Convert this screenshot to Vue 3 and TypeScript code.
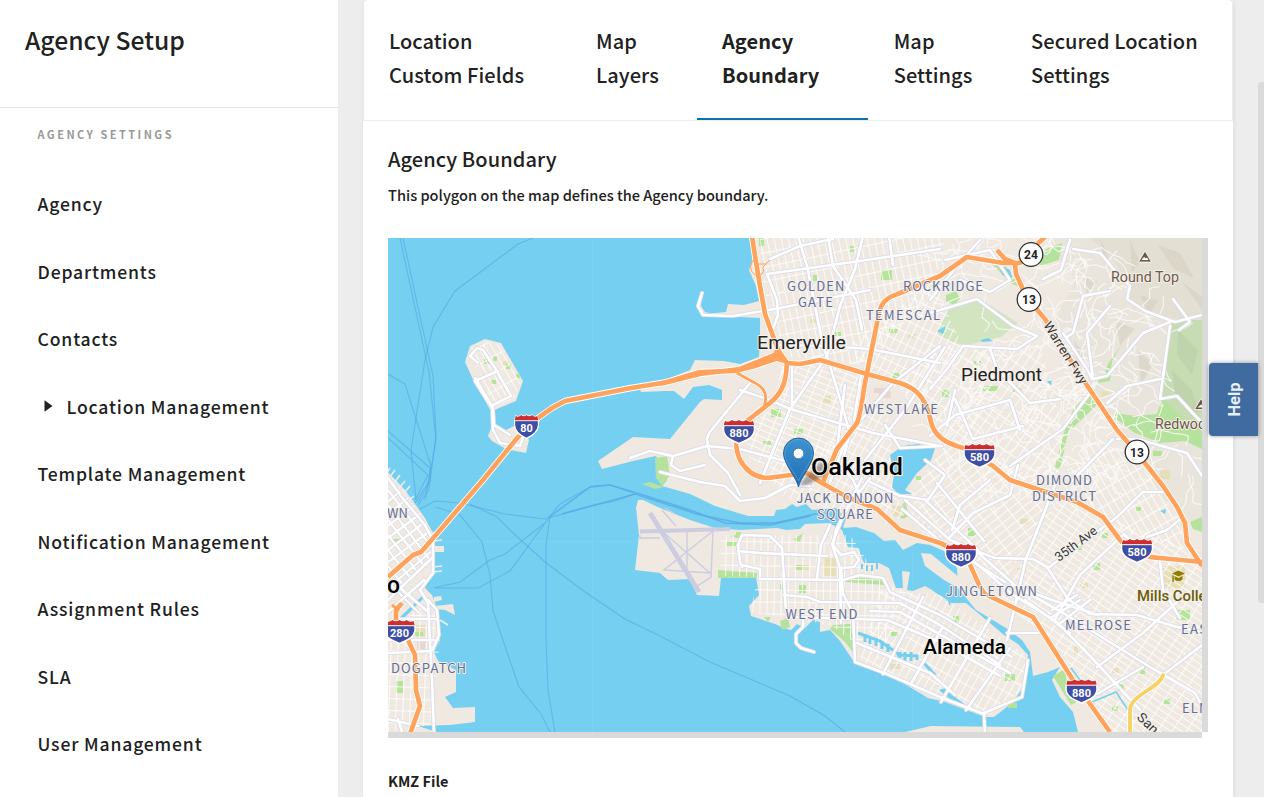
<script setup lang="ts">
interface Tab { lines: string[]; active?: boolean }
interface MapLabel { t: string; x: number; y: number; w?: number; k: string; r?: number }
interface Grid { id: string; w: number; h: number; a: number; pts: string }
interface Badge { n: string; x: number; y: number }

const tabs: Tab[] = [
  { lines: ['Location', 'Custom Fields'] },
  { lines: ['Map', 'Layers'] },
  { lines: ['Agency', 'Boundary'], active: true },
  { lines: ['Map', 'Settings'] },
  { lines: ['Secured Location', 'Settings'] },
]

const navItems = [
  { label: 'Agency' },
  { label: 'Departments' },
  { label: 'Contacts' },
  { label: 'Location Management', expandable: true },
  { label: 'Template Management' },
  { label: 'Notification Management' },
  { label: 'Assignment Rules' },
  { label: 'SLA' },
  { label: 'User Management' },
]

const land: string[] = [
  // East Bay mainland
  'M751 238L753 258 749 270 756 286 759 301 744 305 728 304 726 312 704 314 698 306 701 293 703 293 701 306 705 312 722 316 760 318 760 340 759 357 740 364 724 361 695 360 690 370 670 378 640 388 641 392 666 391 674 391 684 399 693 387 709 385 722 390 722 400 704 399 700 402 670 439 633 437 598 461 602 469 633 461 656 456 663 468 667 480 662 486 676 490 690 494 715 506 748 516 774 516 776 510 785 509 792 504 797 507 806 504 812 510 836 508 846 518 843 528 856 527 874 533 884 541 895 540 903 550 917 543 930 545 944 551 957 568 958 588 976 610 1006 628 1022 640 1030 652 1033 676 1048 672 1060 667 1052 680 1060 697 1073 712 1078 732 1202 732 1202 238Z',
  // Alameda
  'M638 500L636 508 639 535 635 570 660 573 668 580 690 579 697 595 719 596 721 578 756 577 759 595 749 606 751 616 775 624 784 628 791 630 797 624 805 628 813 620 820 622 820 632 830 630 840 641 854 662 890 675 928 698 945 702 985 717 994 717 1012 703 1025 685 1028 655 1018 644 1004 635 984 618 966 603 950 603 932 590 925 586 913 591 907 590 910 572 902 571 903 588 896 588 889 568 879 563 864 563 858 548 848 547 842 530 829 523 805 524 800 529 786 530 777 528 740 530 715 528 690 520 660 508 643 500Z',
  // Coast Guard Island
  'M921 553L931 554 948 568 965 582 958 588 944 580 925 566Z',
  // Bay Farm and Treasure Island
  'M905 732L931 726 1020 727 1024 732Z',
  'M465 362L470 346 485 339 501 343 523 381 516 401 492 411 496 425 506 430 518 424 529 440 526 453 506 449 492 441 488 436 495 418 475 384Z',
  // San Francisco
  'M388 472L405 490 425 518 433 533 433 570 425 588 432 595 437 608 440 625 440 639 434 652 438 661 456 670 456 692 445 697 453 708 475 707 475 722 450 725 418 726 437 732 388 732Z',
  'M435 546L444 546 444 552 435 552ZM434 597L441 596 442 600 434 602ZM435 606L453 604 455 615 445 610 435 609Z',
]

const hills = 'M1043 238L1202 238 1202 530 1165 500 1130 452 1080 380 1050 330 1075 280Z'

const water = [
  'M903 446L918 444 935 448 931 460 917 473 905 490 912 494 898 494 892 487 894 475 890 455Z',
  'M999 265L1010 270 1012 278 1002 275ZM937 331L946 326 943 334ZM981 340L988 338 993 341 982 342ZM1047 381L1052 381 1051 386ZM1160 511L1166 509 1165 514Z',
  'M399 618L423 595 423 599 402 620Z',
  'M939 690L946 688 955 697 966 705 954 702Z',
]

const greens = [
  'M937 332L950 307 981 300 1018 323 1001 337 964 346 943 338Z',
  'M946 295L956 291 960 299 954 305 946 301ZM992 264L1005 265 1020 287 1012 284ZM1046 249L1062 243 1059 260 1039 266Z',
  'M1166 344L1173 320 1202 320 1202 449 1185 441 1160 443 1135 433 1115 418 1115 413 1135 416 1157 414 1164 391Z',
  'M1108 364L1122 344 1112 361 1110 381 1097 383 1094 378 1104 375ZM1092 394L1100 402 1081 420 1068 432 1060 470 1055 467 1065 429 1075 405Z',
  'M718 570L757 573 757 578 718 578ZM846 577L882 579 884 585 846 582ZM846 624L853 624 855 655 845 642 830 629 833 625Z',
  'M897 450L910 444 915 450 908 459ZM897 513L905 501 909 516 902 519ZM655 458L667 456 670 475 662 486 656 478Z',
  'M730 536L740 534 742 539ZM793 540L803 533 800 542ZM780 621L788 618 790 627 782 630ZM764 617L771 617 768 622ZM1053 676L1065 669 1068 692 1080 700 1071 705Z',
  'M1190 522L1202 517V532L1193 529ZM1012 393L1016 385 1022 390ZM642 484L650 482 664 487 655 489Z',
]

const smallParks: number[][] = [
  [881, 270, 11, 10], [771, 409, 10, 8], [794, 429, 9, 5], [892, 373, 7, 6], [834, 332, 7, 4], [889, 329, 9, 4], [763, 441, 8, 4], [850, 246, 4, 6], [813, 275, 4, 6],
  [727, 541, 11, 5], [736, 532, 5, 6], [796, 565, 7, 5], [799, 585, 7, 8], [780, 584, 4, 7], [891, 632, 7, 4], [968, 528, 8, 8], [1005, 674, 10, 7], [1008, 703, 9, 5], [953, 616, 6, 6], [1093, 563, 7, 7], [1102, 533, 6, 5],
  [1137, 668, 8, 6], [1118, 684, 6, 7], [1112, 706, 6, 5], [1164, 699, 6, 5], [1176, 610, 14, 10], [942, 390, 7, 7], [983, 386, 15, 5], [974, 361, 7, 4], [1153, 451, 9, 5], [396, 681, 7, 12], [415, 632, 8, 4], [393, 539, 8, 4], [484, 359, 7, 5], [493, 356, 4, 5], [506, 364, 5, 5], [491, 380, 5, 4], [516, 374, 4, 4], [822, 498, 5, 3], [916, 476, 5, 4], [1076, 544, 6, 6], [1136, 507, 5, 4], [759, 238, 5, 8],
]
const sandParks: number[][] = [
  [822, 396, 9, 7], [885, 392, 6, 6], [908, 334, 8, 4], [823, 558, 13, 18], [802, 565, 7, 5], [892, 506, 12, 10], [1163, 566, 22, 22], [1101, 391, 8, 6], [1160, 470, 10, 9], [1145, 538, 8, 5], [1017, 568, 9, 4], [1080, 583, 8, 5], [416, 625, 9, 12], [503, 361, 6, 4], [890, 664, 10, 5], [810, 319, 6, 4], [1020, 519, 8, 5], [932, 610, 6, 4], [1112, 668, 7, 5], [1074, 646, 4, 8],
]

const grids: Grid[] = [
  { id: 'g1', w: 7, h: 14, a: -12, pts: '760,238 945,238 930,300 880,345 860,365 790,356 765,310' },
  { id: 'g2', w: 6, h: 12, a: -68, pts: '782,362 860,370 850,432 815,470 750,462 745,430 775,405' },
  { id: 'g3', w: 7, h: 11, a: 26, pts: '850,345 935,280 950,320 965,350 920,400 865,372' },
  { id: 'g4', w: 7, h: 10, a: 28, pts: '760,470 830,440 860,390 890,420 892,480 905,520 835,510 790,500' },
  { id: 'g5', w: 7, h: 13, a: 52, pts: '905,500 950,440 1040,480 1060,500 1030,540 1000,590 960,550 925,540' },
  { id: 'g6', w: 6, h: 12, a: -56, pts: '1000,600 1060,495 1100,515 1180,545 1202,570 1202,732 1110,732 1060,650' },
  { id: 'g7', w: 7, h: 12, a: 1, pts: '721,535 850,535 880,580 905,592 880,660 830,625 751,612 757,577 721,576' },
  { id: 'g8', w: 7, h: 13, a: 29, pts: '880,590 940,595 1026,655 1022,690 990,714 935,695 860,660' },
  { id: 'g10', w: 7, h: 12, a: 2, pts: '388,630 432,600 440,640 430,725 388,732' },
  { id: 'g11', w: 6, h: 15, a: -30, pts: '471,348 487,342 501,346 520,383 514,399 492,408' },
  { id: 'g12', w: 8, h: 13, a: 35, pts: '930,345 1040,345 1060,420 1070,470 1020,480 945,440 900,390' },
  { id: 'g13', w: 7, h: 15, a: -30, pts: '1060,490 1085,440 1135,455 1180,520 1185,550 1120,530' },
]

const roads: string[] = [
  'M798 236L807 266 823 346 828 359 837 389 850 433 840 470', 'M770 259L800 246 833 239', 'M767 274L810 268 860 261 940 249',
  'M863 236L855 269 840 306 827 356 790 409 760 483', 'M828 236L833 266 856 300 862 330', 'M767 274L777 300 778 315 771 335',
  'M778 345L827 346 870 349 940 363', 'M740 390L770 400 790 409 873 433 940 446', 'M792 366L792 409', 'M707 439L709 433 750 383',
  'M707 439L710 455 728 473 740 495', 'M660 453L673 456 707 446 740 449 793 463', 'M673 456L671 465 680 471 705 465', 'M660 472L700 482 725 486 740 501 765 498 790 485 810 486',
  'M702 293L698 306 703 315 733 316 780 308 870 290', 'M847 436L893 383 940 346', 'M889 236L893 265', 'M846 440L830 482',
  'M865 460L905 410 945 347', 'M885 425L900 448 942 446', 'M925 460L945 475 928 500 902 496', 'M870 482L900 496', 'M845 385L837 449', 'M862 370L854 420',
  'M845 470L853 480 862 500', 'M870 478L845 512 832 544 840 568 841 623', 'M862 478L836 530 833 545 841 555', 'M830 525L821 545 817 578', 'M742 567L740 563 738 545 742 535 770 536 782 548 784 580 786 612',
  'M738 551L760 553 827 556', 'M742 565L760 569 760 576', 'M760 579L843 580 860 575 883 578 890 592 940 615 1012 657',
  'M784 595L807 597 820 602 900 603 940 625 1000 665', 'M787 617L887 620 940 642 1000 676', 'M870 611L900 612 950 640 1010 673', 'M841 555L854 552 859 560 854 567 841 568',
  'M841 568L843 594 853 613 855 662 887 674 940 697 984 714', 'M857 643L891 657 930 673 955 695', 'M883 674L923 597', 'M911 684L942 628', 'M941 702L990 618', 'M966 710L1010 648', 'M985 736L984 713 1022 697 1028 660',
  'M803 620L803 627 796 634 796 643 801 648 814 652', 'M976 551L1017 587 1063 613 1150 667 1195 693 1202 706', 'M970 558L1012 594 1057 622 1091 657 1140 710', 'M905 500L950 540 976 551 995 558 1033 559 1047 567 1068 599 1090 614 1137 615 1177 627 1202 632',
  'M1007 640L1026 559 1057 480', 'M1007 633L1040 633', 'M1048 568L1117 517 1143 492 1165 492', 'M1055 619L1080 575 1124 534 1145 556', 'M1097 667L1143 633 1186 594', 'M1097 694L1143 667', 'M1160 561L1163 590 1180 618',
  'M1147 537L1167 530 1183 517', 'M1163 675L1202 645', 'M1012 585L1052 600 1098 615', 'M1025 600L1070 633', 'M1052 617L1080 600 M1058 625L1090 600 M1052 610L1077 595',
  'M950 537L973 513 1010 495 1018 465', 'M925 500L978 550', 'M937 483L984 541', 'M902 509L940 541', 'M970 560L1005 582', 'M952 530L960 505 990 480',
  'M1070 240L1061 270 1043 279', 'M1073 249L1100 253 1117 273 1130 286 1127 299 1145 311 1175 322 1202 315', 'M1110 291L1083 296 1073 333 1067 337',
  'M1173 299L1190 322 1179 330', 'M1170 322L1143 333 1107 376 1093 379 1087 333 1110 306', 'M1170 326L1160 399 1177 396 1202 423',
  'M930 313L977 299 1013 326 1037 336 1017 349 963 346 947 369 930 389', 'M990 349L997 369 1030 403 1060 399', 'M955 390L947 426', 'M955 399L973 439 1023 426', 'M1063 333L1087 369 1092 379',
  'M1107 403L1127 386 1160 379', 'M1010 466L1063 429 1090 393', 'M1117 439L1137 439 1187 453 1202 476', 'M1070 483L1113 439', 'M930 436L955 415 1010 400 1020 430', 'M930 300L960 262 980 240', 'M945 260L990 250 1010 280 990 292 960 280',
  'M388 478L404 500 425 525 433 540V573L420 590 428 603 432 680 434 732', 'M388 600L433 557', 'M388 612L424 580', 'M388 653L432 651 439 635 437 610 428 600', 'M388 640L434 640', 'M398 619L437 619', 'M399 587L427 611', 'M402 732L398 719', 'M418 726L388 719',
  'M478 363L470 356 477 348 483 350 495 368 511 396 491 406 475 381 498 371', 'M475 378L493 408 494 425 510 435', 'M492 405L493 430 500 443 520 446 524 435', 'M630 458L650 451 668 455',
]

const sfStreets: string[] = [
  'M388 502L400 491M388 514L408 498M388 526L414 506M388 538L420 514M388 550L425 522M388 562L430 531M388 574L433 542M388 588L433 550',
  'M388 490L433 549M388 505L430 560M388 520L425 567M388 535L419 574M388 550L412 580M388 566L404 586M388 582L420 614',
]

const freeways: string[] = [
  'M388 577L413 555 421 552 435 536 483 480 518 437 538 418 552 408 565 401 631 388 668 382 700 374 740 369 765 359 777 354',
  'M660 384L700 372 735 371 755 366 778 358', 'M752 236L756 262 760 286 765 314 778 350 787 363 800 364 820 360 867 374 900 383C915 388 925 396 930 418C933 436 945 443 963 448L993 466 1010 480 1040 490 1077 502 1103 517 1120 540C1130 552 1145 557 1160 558L1202 562',
  'M787 363C786 383 782 393 770 403L743 424C734 434 735 448 740 460C748 474 760 480 775 477L807 473 820 482 847 497 877 509 900 530 940 543 960 552C972 560 976 585 985 594L1033 617 1073 680 1110 732',
  'M737 373L755 383C765 388 768 395 764 407', 'M823 482L837 449 857 423C862 410 862 396 866 378L879 313C882 299 890 297 900 293L940 276 967 257 985 260 1003 263 1020 263 1031 250 1046 236',
  'M997 250L1005 259 1015 263 1016 274 1027 298 1045 319 1078 372 1117 430 1137 453 1163 486 1177 507 1185 523 1187 543 1202 566',
  'M402 603L396 610 396 625', 'M408 640L415 655 416 690 420 706 410 734', 'M392 605L399 611',
]

const ferries = [
  'M400 238L429 372 436 440 428 486 418 502', 'M403 238L433 376 436 435 429 490 418 505', 'M388 374L405 384 431 466 425 500', 'M388 431L430 468 430 480 415 503', 'M533 238L518 244 455 291 433 327 425 360 411 450 416 500', 'M388 438L428 475 415 500',
  'M420 509L435 501 460 503 505 514 545 519 562 514 590 506 615 501 635 494', 'M436 507L460 515 482 542 490 575 493 611 519 687 541 714 550 732', 'M470 504L497 517 512 532 545 562 585 592 625 619 660 636 710 662 790 696 825 716 845 732', 'M434 588L478 588 510 571 548 519 M434 588L460 582 490 560 505 554 545 523',
  'M555 732L548 690 546 640 546 545 550 516 560 504 592 486 610 485 634 493',
]
const channels = ['M548 518L590 487 610 485 640 494 690 510 725 523 770 525 810 516', 'M562 514L635 494 700 515 740 523 775 523 820 513']

const labels: MapLabel[] = [
  { t: 'GOLDEN', x: 787, y: 291, w: 57.5, k: 'area' }, { t: 'GATE', x: 798, y: 307, w: 35, k: 'area' }, { t: 'ROCKRIDGE', x: 903, y: 290.5, w: 80, k: 'area' }, { t: 'TEMESCAL', x: 866, y: 320, w: 74, k: 'area' },
  { t: 'WESTLAKE', x: 864, y: 414, w: 74, k: 'area' }, { t: 'JACK LONDON', x: 796.5, y: 503, w: 97, k: 'area' }, { t: 'SQUARE', x: 817, y: 519, w: 56, k: 'area' }, { t: 'DIMOND', x: 1036, y: 484.5, w: 56, k: 'area' },
  { t: 'DISTRICT', x: 1032, y: 500.5, w: 64, k: 'area' }, { t: 'WEST END', x: 785.5, y: 618.5, w: 72, k: 'area' }, { t: 'JINGLETOWN', x: 946, y: 595.5, w: 91, k: 'area' }, { t: 'MELROSE', x: 1065, y: 630, w: 66, k: 'area' },
  { t: 'EAST', x: 1181, y: 634, w: 35, k: 'area' }, { t: 'ELMHURST', x: 1182, y: 713, w: 75, k: 'area' }, { t: 'DOGPATCH', x: 391, y: 672.5, w: 75, k: 'area' }, { t: 'WN', x: 387, y: 517.5, w: 21, k: 'area' },
  { t: 'Emeryville', x: 757, y: 349, w: 89, k: 'town' }, { t: 'Piedmont', x: 961, y: 381, w: 81, k: 'town' }, { t: 'Oakland', x: 811, y: 474.5, w: 92, k: 'city' }, { t: 'Alameda', x: 923, y: 654, w: 83, k: 'burg' }, { t: 'o', x: 387, y: 592.5, w: 13, k: 'city' },
  { t: 'Round Top', x: 1111, y: 282, w: 68, k: 'peak' }, { t: 'Redwood', x: 1155, y: 429, w: 59, k: 'peak' }, { t: 'Mills College', x: 1137, y: 601, w: 86, k: 'school' },
  { t: 'Warren Fwy', x: 1043, y: 325, w: 71, k: 'street', r: 58 }, { t: '35th Ave', x: 1059, y: 562, w: 49, k: 'street', r: -37 }, { t: 'San Leandro', x: 1136, y: 718, w: 80, k: 'street', r: 44 },
]

const interstates: Badge[] = [
  { n: '80', x: 526.5, y: 427 }, { n: '880', x: 739, y: 432 }, { n: '580', x: 979.5, y: 456 }, { n: '880', x: 961, y: 556 }, { n: '580', x: 1137, y: 551 }, { n: '880', x: 1081.5, y: 691.5 }, { n: '280', x: 399.5, y: 632 },
]
const stateRoutes: Badge[] = [{ n: '24', x: 1031, y: 254.5 }, { n: '13', x: 1029, y: 299.5 }, { n: '13', x: 1137, y: 452 }]

// Deterministic winding lanes for the hillside neighbourhoods
function windingLanes(): string[] {
  let seed = 41
  const rnd = () => { seed = (seed * 16807) % 2147483647; return seed / 2147483647 }
  const out: string[] = []
  for (let i = 0; i < 260; i++) {
    const f = rnd()
    let x = 950 + rnd() * 245
    let y = 240 + f * 240
    if (x > 1120 && y < 318) continue
    if (x > 1160 && y < 450) continue
    if (x > 930 && x < 1030 && y > 290 && y < 350) continue
    let d = `M${x.toFixed(1)} ${y.toFixed(1)}`
    let a = rnd() * 6.28
    for (let j = 0; j < 5; j++) {
      a += (rnd() - 0.5) * 2.4
      const mx = x + Math.cos(a) * 5, my = y + Math.sin(a) * 5
      a += (rnd() - 0.5) * 1.6
      x = mx + Math.cos(a) * 5
      y = my + Math.sin(a) * 5
      d += `Q${mx.toFixed(1)} ${my.toFixed(1)} ${x.toFixed(1)} ${y.toFixed(1)}`
    }
    out.push(d)
  }
  return out
}
const lanes = windingLanes()
</script>

<template>
  <div class="page">
    <aside class="sidebar">
      <header class="side-head"><h1>Agency Setup</h1></header>
      <p class="side-caption">AGENCY SETTINGS</p>
      <nav class="side-nav">
        <a v-for="item in navItems" :key="item.label" class="nav-item">
          <svg v-if="item.expandable" class="caret" width="9" height="12" viewBox="0 0 9 12"><path d="M.5 .3 8.5 6 .5 11.7z" /></svg>
          <span>{{ item.label }}</span>
        </a>
      </nav>
    </aside>

    <main class="card">
      <div class="tabs">
        <div v-for="(tab, i) in tabs" :key="i" class="tab" :class="{ active: tab.active }">
          <span v-for="line in tab.lines" :key="line">{{ line }}</span>
        </div>
      </div>
      <section class="content">
        <h2>Agency Boundary</h2>
        <p class="desc">This polygon on the map defines the Agency boundary.</p>
        <div class="map">
          <svg width="814" height="494" viewBox="388 238 814 494">
            <defs>
              <pattern v-for="g in grids" :id="g.id" :key="g.id" :width="g.w" :height="g.h" patternUnits="userSpaceOnUse" :patternTransform="`rotate(${g.a})`">
                <path :d="`M0 .5H${g.w}M.5 0V${g.h}`" class="grid-line" />
              </pattern>
              <linearGradient id="pin" x1="0" y1="0" x2="0" y2="1">
                <stop offset="0" stop-color="#3f94d1" /><stop offset="1" stop-color="#1e6cb2" />
              </linearGradient>
              <filter id="soft" x="-50%" y="-50%" width="200%" height="200%"><feGaussianBlur stdDeviation="1.8" /></filter>
            </defs>
            <rect x="388" y="238" width="814" height="494" fill="#75cff0" />
            <path d="M592.5 238V732M912.5 238V732M388 541.5H1202" class="tile-seam" />
            <path v-for="(d, i) in ferries" :key="'f' + i" :d="d" class="ferry" />
            <path v-for="(d, i) in land" :key="'l' + i" :d="d" class="land" />
            <path :d="hills" fill="#e8e3d9" opacity=".75" />
            <path d="M1090 238L1202 238V320L1160 318 1128 299 1130 285 1112 258Z" fill="#e4dfd3" />
            <g fill="#d4cec0" opacity=".55">
              <path d="M1130 240l10 22-8 10zM1158 245l22 8 14 25-20-9zM1182 282l20 15v12zM1085 275l12 7-10 14zM1115 320l20 9-15 16zM1074 340l10 14-4 13zM1138 350l15 14-12 21zM1030 285l12 10-7 14zM1100 238l9 20-5 4zM1140 295l18 6-9 13z" />
            </g>
            <path v-for="(d, i) in greens" :key="'g' + i" :d="d" class="green" :class="{ pale: i === 0 }" />
            <path d="M1174 321L1202 320V432L1185 420 1162 398 1166 345Z" fill="#c8dcb4" />
            <path d="M1178 330l20 20-6 25-15-20zM1172 370l20 20 7 26-24-22z" fill="#bfd3ac" />
            <rect v-for="(p, i) in sandParks" :key="'s' + i" :x="p[0]" :y="p[1]" :width="p[2]" :height="p[3]" fill="#e6dfb9" />
            <rect v-for="(p, i) in smallParks" :key="'p' + i" :x="p[0]" :y="p[1]" :width="p[2]" :height="p[3]" fill="#b3e497" />
            <path d="M874 388h16v10h-11v-5h-5z" fill="#ead6d0" />
            <path d="M417 642h9v7h-9z" fill="#ead6d0" />
            <polygon v-for="g in grids" :key="'a' + g.id" :points="g.pts" :fill="`url(#${g.id})`" />
            <path v-for="(d, i) in water" :key="'w' + i" :d="d" fill="#75cff0" />
            <g class="creek">
              <path d="M858 633L880 641 900 655 M865 634v8M870 636v8M876 638v8M882 641v8M888 644v8 M897 655L918 656M900 652v6M905 652v9M911 652v9M917 655v5M922 661L935 675" />
              <path d="M1092 702L1116 692 1128 710M1071 668L1080 680" class="thin" />
              <path d="M948 598l2 7" class="thin" />
            </g>
            <path d="M862 564V569M867 565V571M872 565V571M877 563V569" class="dock" />
            <path v-for="(d, i) in lanes" :key="'h' + i" :d="d" class="lane" />
            <g class="runway">
              <path d="M640 531.5 730 529" stroke-width="4" /><path d="M650 513 699 592" stroke-width="5" />
              <path d="M640 535v3h20M662 510l14 16M687 531v41M713 531l-2 46-15 10M713 531 664 570l46 3M662 531l49 43M665 508l10 6" stroke-width="1.4" />
            </g>
            <path v-for="(d, i) in channels" :key="'c' + i" :d="d" class="ferry deep" />
            <path v-for="(d, i) in sfStreets" :key="'sc' + i" :d="d" class="street-case" />
            <path v-for="(d, i) in sfStreets" :key="'ss' + i" :d="d" class="street-line" />
            <path v-for="(d, i) in roads" :key="'rc' + i" :d="d" class="road-case" />
            <path v-for="(d, i) in roads" :key="'r' + i" :d="d" class="road" />
            <path d="M386 474 390 468M389 478l6-8M394 483l6-8M399 488l6-7M404 493l6-7M409 500l5-4M433 533l9-3M433 541l9-1M433 567l9-1M433 572l9-1M440 620l8 5" class="pier" />
            <path d="M1163 675C1160 688 1130 695 1130 710L1130 734" class="yellow-case" />
            <path d="M1163 675C1160 688 1130 695 1130 710L1130 734" class="yellow" />
            <path v-for="(d, i) in freeways" :key="'fc' + i" :d="d" class="fwy-case" :class="{ slim: i === 4 || i === 9 }" />
            <path v-for="(d, i) in freeways" :key="'fw' + i" :d="d" class="fwy" :class="{ slim: i === 4 || i === 9 }" />
            <path d="M755 258q-9 10 0 17q10 2 8-8l7-7M756 264h10" class="ramp" />
            <path d="M777 346l8 12 6 7-14-4-8 1z" fill="#ffa35c" />

            <path d="M799 486L808 474 821 462 829 464 824 476 807 485Z" fill="#333" opacity=".4" filter="url(#soft)" />
            <text
              v-for="l in labels" :key="l.t + l.x" :x="l.x" :y="l.y" :class="['lbl', l.k]" :textLength="l.w"
              :lengthAdjust="l.k === 'area' ? 'spacing' : 'spacingAndGlyphs'" :transform="l.r ? `rotate(${l.r} ${l.x} ${l.y})` : undefined"
            >{{ l.t }}</text>

            <g class="peak-icon">
              <path d="M1145 251 1151.500 262H1138.500Z" /><path d="M1141.500 260h7l-1.500-2.500-1.500 1-1-1.500-1 .5z" class="snow" />
              <path d="M1201 398.500 1207.500 409.500H1194.500Z" /><path d="M1197.500 407.500h7l-3.500-3z" class="snow" />
            </g>
            <path d="M1178.5 570.5 1185 573.5 1178.5 576.5 1172 573.5ZM1174.5 576l4 2 4-2v3.500q-4 3-8 0zM1172.300 575v7h1.500v-6z" fill="#8f7d00" />

            <g v-for="(b, i) in interstates" :key="'i' + i" :transform="`translate(${b.x} ${b.y})`">
              <g :transform="b.n.length === 2 ? 'scale(.77 1)' : undefined">
                <path d="M-14-11Q-10.500-9-7-12Q-3.500-9.500 0-12Q3.500-9.500 7-12Q10.500-9 14-11Q16-6 15.500-2C14.500 6 7 8.500 0 11.500C-7 8.500-14.500 6-15.500-2Q-16-6-14-11Z" class="shield" />
                <path d="M-15-6H15Q15.300-8 14-11Q10.500-9 7-12Q3.500-9.500 0-12Q-3.500-9.500-7-12Q-10.500-9-14-11Q-15.300-8-15-6Z" fill="#cc2f30" />
                <path d="M-15.200-6.300H15.200" stroke="#fff" stroke-width="1" />
              </g>
              <text y="5" class="shield-no" :textLength="b.n.length === 2 ? 12.500 : 19" lengthAdjust="spacingAndGlyphs">{{ b.n }}</text>
            </g>
            <g v-for="(b, i) in stateRoutes" :key="'n' + i" :transform="`translate(${b.x} ${b.y})`">
              <circle r="11.800" class="route" /><text y="4.500" class="route-no">{{ b.n }}</text>
            </g>

            <path d="M798.500 487C797 478 783.500 464 783.500 453A15 15 0 0 1 813.500 453C813.500 464 800 478 798.500 487Z" fill="url(#pin)" stroke="#2367a3" stroke-width="1" />
            <path d="M798.500 481C796 473 784.800 463 784.800 453A13.700 13.700 0 0 1 812.200 453C812.200 463 801 473 798.500 481Z" class="pin-light" />
            <circle cx="798.500" cy="453.500" r="5.300" fill="#fff" stroke="#2c70ab" stroke-width=".8" />
          </svg>
        </div>
        <p class="kmz">KMZ File</p>
      </section>
    </main>
    <div class="scroll-thumb"></div>
    <button class="help"><span>Help</span></button>
  </div>
</template>

<style>
body { margin: 0; overflow: hidden; }
</style>

<style scoped>
.page { position: relative; display: flex; width: 1264px; height: 797px; overflow: hidden; background: #ededed; color: #212121; font-family: "Noto Sans CJK SC", "Noto Sans", sans-serif; font-weight: 500; }
h1, h2, p { margin: 0; font-weight: 500; }
.sidebar { width: 338px; flex: none; background: #fff; }
.side-head { box-sizing: border-box; height: 108px; padding: 20px 25px 0; border-bottom: 1px solid #e6e6e6; }
h1 { font-size: 24.700px; line-height: 38px; white-space: nowrap; }
.side-caption { padding: 17px 37px 0 37.500px; font-size: 11px; font-weight: 700; line-height: 18px; letter-spacing: 2.450px; color: #999; }
.side-nav { display: flex; flex-direction: column; padding: 27px 0 0 37.500px; }
.nav-item { display: flex; align-items: center; height: 67.500px; font-size: 17.600px; letter-spacing: .83px; white-space: nowrap; }
.caret { margin: 0 13.500px 0 6.500px; fill: #212121; }
.card { box-sizing: border-box; width: 870px; flex: none; margin-left: 25px; background: #fff; border-radius: 5px 5px 0 0; box-shadow: 1px 0 4px rgba(0, 0, 0, .08); }
.tabs { box-sizing: border-box; display: grid; grid-template-columns: 207px 126px 171px 138px 1fr; height: 121px; border: 1px solid #ececec; border-top: 0; margin: 0; }
.tab { display: flex; flex-direction: column; box-sizing: border-box; padding: 24px 0 0 25px; font-size: 20px; line-height: 34px; letter-spacing: .08px; white-space: nowrap; }
.tab:nth-child(4) { padding-left: 25.700px; }
.tab.active { font-weight: 700; border-bottom: 2px solid #0a72b0; letter-spacing: .05px; }
.content { padding: 22px 25px 0; }
h2 { font-size: 20px; line-height: 32px; letter-spacing: .08px; }
.desc { margin-top: 7px; font-size: 14.580px; line-height: 26px; }
.map { width: 814px; height: 494px; margin-top: 30px; overflow: hidden; background: #75cff0; box-shadow: 6px 0 0 #dadada, 0 6px 0 #dadada; }
.map svg { display: block; }
.kmz { margin-top: 36px; font-size: 14.500px; line-height: 26px; font-weight: 700; }
.scroll-thumb { position: absolute; left: 1258px; top: 82px; width: 8px; height: 521px; border-radius: 4px; background: #dadada; }
.help { position: absolute; left: 1208.500px; top: 362.500px; width: 49px; height: 73px; padding: 0; border: 0; border-radius: 4px 0 0 4px; background: #3f6ba1; box-shadow: 0 0 4px rgba(0, 0, 0, .4); display: flex; align-items: center; justify-content: center; }
.help span { transform: translateX(1.500px) rotate(-90deg); color: #e9eff7; font: 700 16.500px Roboto, sans-serif; }

.grid-line { stroke: #fff; stroke-width: 1; opacity: .8; fill: none; }
.tile-seam { stroke: #85d4f2; stroke-width: 1; opacity: .6; }
.ferry { fill: none; stroke: #57a9e4; stroke-width: 1.100; opacity: .65; }
.deep { stroke-width: 1.500; opacity: .8; }
.land { fill: #efe9e1; }
.green { fill: #b5e29c; }
.green.pale { fill: #d2e5c0; }
.lane { fill: none; stroke: #fbfaf8; stroke-width: 1.100; opacity: .9; }
.dock { stroke: #75cff0; stroke-width: 2; }
.creek path { fill: none; stroke: #75cff0; stroke-width: 3; }
.creek .thin { stroke-width: 1.500; }
.runway path { fill: none; stroke: #cccde0; }
.street-case { fill: none; stroke: #d6d5e2; stroke-width: 3.400; }
.street-line { fill: none; stroke: #fff; stroke-width: 2.200; }
.road-case { fill: none; stroke: #d9dae9; stroke-width: 4.200; stroke-linejoin: round; stroke-linecap: round; }
.road { fill: none; stroke: #fff; stroke-width: 2.600; stroke-linejoin: round; stroke-linecap: round; }
.pier { fill: none; stroke: #eeeff3; stroke-width: 1.500; }
.yellow-case { fill: none; stroke: #fff; stroke-width: 5.500; stroke-linecap: round; }
.yellow { fill: none; stroke: #f5d264; stroke-width: 3.800; stroke-linecap: round; }
.fwy-case { fill: none; stroke: #fff; stroke-width: 6.400; stroke-linejoin: round; }
.fwy { fill: none; stroke: #ffa35c; stroke-width: 4.700; stroke-linejoin: round; }
.fwy-case.slim { stroke-width: 4.200; }
.fwy.slim { stroke-width: 3; }
.ramp { fill: none; stroke: #ffa35c; stroke-width: 1; }
.lbl { font-family: Roboto, sans-serif; font-weight: 400; paint-order: stroke; stroke: #f5f1eb; stroke-width: 2px; stroke-linejoin: round; }
.area { font-family: "Noto Sans CJK SC", sans-serif; font-size: 13px; fill: #636e98; stroke-width: 1.800px; }
.town { font-size: 19px; fill: #222; }
.city { font-size: 23.500px; font-weight: 500; fill: #000; }
.burg { font-size: 20px; font-weight: 500; fill: #000; }
.peak { font-size: 14.500px; fill: #70564a; }
.school { font-size: 14px; font-weight: 500; fill: #6c5c0c; }
.street { font-size: 13px; fill: #383838; }
.peak-icon path { fill: #70564a; stroke: #fff; stroke-width: .8; }
.peak-icon .snow { fill: #fff; stroke: none; }
.shield { fill: #3e4ea5; stroke: #fff; stroke-width: 1.500; }
.shield-no, .route-no { font-family: Roboto, sans-serif; font-size: 11.500px; font-weight: 700; text-anchor: middle; fill: #fff; }
.route { fill: #fff; stroke: #303030; stroke-width: 1.300; }
.route-no { fill: #222; font-size: 12px; }
.pin-light { fill: none; stroke: #67aee0; stroke-width: 1; opacity: .5; }
</style>
